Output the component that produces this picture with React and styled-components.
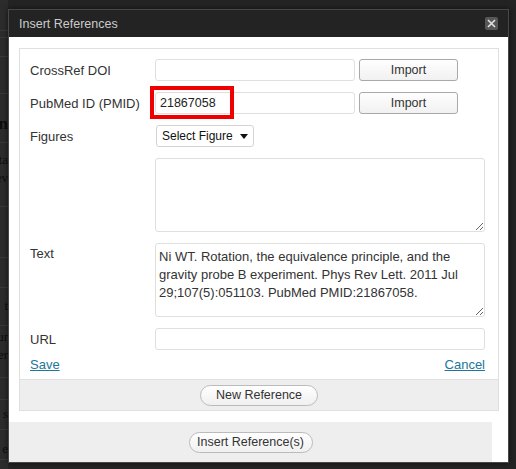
import styled, { createGlobalStyle } from 'styled-components'

const GlobalStyle = createGlobalStyle`
  html, body {
    margin: 0;
    padding: 0;
    background: #212121;
  }
  * {
    box-sizing: border-box;
  }
`

const Screen = styled.div`
  position: relative;
  width: 516px;
  height: 469px;
  overflow: hidden;
  background: #242424;
  font-family: 'Liberation Sans', Arial, sans-serif;
`

// page that sits behind the modal overlay, only a sliver shows on the left
const BackPage = styled.div`
  display: flex;
  height: 100%;
`

const PageColumn = styled.div`
  width: 8px;
  display: flex;
  flex-direction: column;
  background: #2c2c2c;
  overflow: hidden;
`

const PageRow = styled.div`
  flex: none;
  height: ${(p) => p.h}px;
  padding-top: ${(p) => p.pad || 0}px;
  border-bottom: 1px solid #3a3a3a;
  font-family: 'Liberation Serif', 'Times New Roman', serif;
  font-size: ${(p) => (p.heading ? 17 : 13)}px;
  font-weight: ${(p) => (p.heading ? 700 : 400)};
  line-height: 18px;
  color: #0d0d0d;
`

const PageLine = styled.div`
  display: flex;
  justify-content: flex-end;
  white-space: nowrap;

  span {
    flex: none;
  }
`

const Dialog = styled.div`
  position: absolute;
  top: 9px;
  left: 8px;
  width: 501px;
  height: 454px;
  border: 1px solid #474747;
  display: flex;
  flex-direction: column;
  background: #fff;
  box-shadow: 0 0 6px rgba(0, 0, 0, 0.6);
`

const TitleBar = styled.div`
  height: 27px;
  flex: none;
  display: flex;
  align-items: center;
  justify-content: space-between;
  padding: 0 10px;
  background: #232323;
  color: #cacaca;
  font-size: 12.5px;
`

const CloseButton = styled.div`
  width: 13px;
  height: 13px;
  border-radius: 2px;
  background: #575757;
  display: flex;
  align-items: center;
  justify-content: center;
`

const Body = styled.div`
  flex: 1;
  display: flex;
  flex-direction: column;
  padding-top: 11px;
`

const Panel = styled.div`
  margin: 0 9px 0 10px;
  border: 1px solid #dfdfdf;
  display: flex;
  flex-direction: column;
`

const FormArea = styled.div`
  padding: 10px 13px 0 10px;
`

const FormGrid = styled.div`
  display: grid;
  grid-template-columns: 125px 330px;
  row-gap: 11px;
`

const Label = styled.div`
  font-size: 13px;
  line-height: 15px;
  color: #333;
  align-self: ${(p) => (p.top ? 'start' : 'center')};
  padding-top: ${(p) => (p.top ? 3 : 0)}px;
`

const Field = styled.div`
  display: flex;
  align-items: center;
  gap: 4px;
  position: relative;
`

const TextInput = styled.input`
  width: ${(p) => p.w || 330}px;
  height: 22px;
  border: 1px solid #dfdfdf;
  border-radius: 3px;
  padding: 0 4px;
  font-family: inherit;
  font-size: 12.5px;
  color: #222;
  background: #fff;
  outline: none;
`

const Highlight = styled.div`
  position: absolute;
  left: -5px;
  top: -6px;
  width: 84px;
  height: 33px;
  border: 4px solid #ee0000;
  pointer-events: none;
`

const ImportButton = styled.button`
  width: 99px;
  height: 22px;
  border: 1px solid #a9a9a9;
  border-radius: 3px;
  background: linear-gradient(#fefefe, #f1f1f1);
  font-family: inherit;
  font-size: 12.5px;
  color: #333;
  padding: 0;
`

const FakeSelect = styled.div`
  margin-left: 1px;
  width: 98px;
  height: 22px;
  border: 1px solid #d4d4d4;
  border-radius: 3px;
  background: #fff;
  display: flex;
  align-items: center;
  justify-content: space-between;
  padding: 0 5px 0 5px;
  font-size: 12px;
  color: #111;
`

const TextArea = styled.textarea`
  width: 330px;
  height: 74px;
  border: 1px solid #dfdfdf;
  border-radius: 3px;
  padding: 4px 3px;
  font-family: inherit;
  font-size: 13px;
  line-height: 18px;
  color: #333;
  resize: vertical;
  outline: none;
  display: block;
`

const LinkRow = styled.div`
  height: 16px;
  margin: 7px 0 6px;
  display: flex;
  justify-content: space-between;
  width: 455px;
`

const Link = styled.a`
  font-size: 13px;
  line-height: 16px;
  color: #21759b;
  text-decoration: underline;
  cursor: pointer;
`

const PanelFooter = styled.div`
  height: 31px;
  border-top: 1px solid #dfdfdf;
  background: #eeeeee;
  display: flex;
  align-items: center;
  justify-content: center;
`

const PillButton = styled.button`
  width: ${(p) => p.w}px;
  height: 21px;
  border: 1px solid #bbbbbb;
  border-radius: 11px;
  background: linear-gradient(#ffffff, #f0f0f0);
  font-family: inherit;
  font-size: 12.5px;
  color: #333;
  padding: 0;
`

const BottomBar = styled.div`
  margin: 11px 16px 0 0;
  height: 40px;
  background: #eeeeee;
  display: flex;
  align-items: center;
  justify-content: center;
`

const pageRows = [
  { h: 31 },
  { h: 7 },
  { h: 19 },
  { h: 37 },
  { h: 49, pad: 21, heading: true, lines: ['n'] },
  { h: 64, pad: 8, lines: ['ta', 'ev'] },
  { h: 51 },
  { h: 30 },
  { h: 38, pad: 9, lines: ['t'] },
  { h: 52, pad: 2, lines: ['ur', 'er'] },
  { h: 22 },
  { h: 30, pad: 5, lines: ['s'] },
  { h: 30, pad: 10, lines: ['e'] },
  { h: 20 },
]

const figureText =
  'Ni WT. Rotation, the equivalence principle, and the gravity probe B experiment. Phys Rev Lett. 2011 Jul 29;107(5):051103. PubMed PMID:21867058.'

export default function App() {
  return (
    <>
      <GlobalStyle />
      <Screen>
        <BackPage>
          <PageColumn>
            {pageRows.map((row, i) => (
              <PageRow key={i} h={row.h} pad={row.pad} heading={row.heading}>
                {(row.lines || []).map((l) => (
                  <PageLine key={l}>
                    <span>{l}</span>
                  </PageLine>
                ))}
              </PageRow>
            ))}
          </PageColumn>
        </BackPage>

        <Dialog>
          <TitleBar>
            <span>Insert References</span>
            <CloseButton>
              <svg width="9" height="9" viewBox="0 0 9 9">
                <path d="M1 1L8 8M8 1L1 8" stroke="#e2e2e2" strokeWidth="1.6" />
              </svg>
            </CloseButton>
          </TitleBar>

          <Body>
            <Panel>
              <FormArea>
                <FormGrid>
                  <Label>CrossRef DOI</Label>
                  <Field>
                    <TextInput w={200} defaultValue="" />
                    <ImportButton>Import</ImportButton>
                  </Field>

                  <Label>PubMed ID (PMID)</Label>
                  <Field>
                    <TextInput w={200} defaultValue="21867058" />
                    <ImportButton>Import</ImportButton>
                    <Highlight />
                  </Field>

                  <Label>Figures</Label>
                  <Field>
                    <FakeSelect>
                      <span>Select Figure</span>
                      <svg width="8" height="5" viewBox="0 0 8 5">
                        <path d="M0 0H8L4 5Z" fill="#111" />
                      </svg>
                    </FakeSelect>
                  </Field>

                  <span />
                  <Field>
                    <TextArea defaultValue="" />
                  </Field>

                  <Label top>Text</Label>
                  <Field>
                    <TextArea defaultValue={figureText} />
                  </Field>

                  <Label>URL</Label>
                  <Field>
                    <TextInput defaultValue="" />
                  </Field>
                </FormGrid>

                <LinkRow>
                  <Link>Save</Link>
                  <Link>Cancel</Link>
                </LinkRow>
              </FormArea>

              <PanelFooter>
                <PillButton w={118}>New Reference</PillButton>
              </PanelFooter>
            </Panel>

            <BottomBar>
              <PillButton w={124}>Insert Reference(s)</PillButton>
            </BottomBar>
          </Body>
        </Dialog>
      </Screen>
    </>
  )
}
